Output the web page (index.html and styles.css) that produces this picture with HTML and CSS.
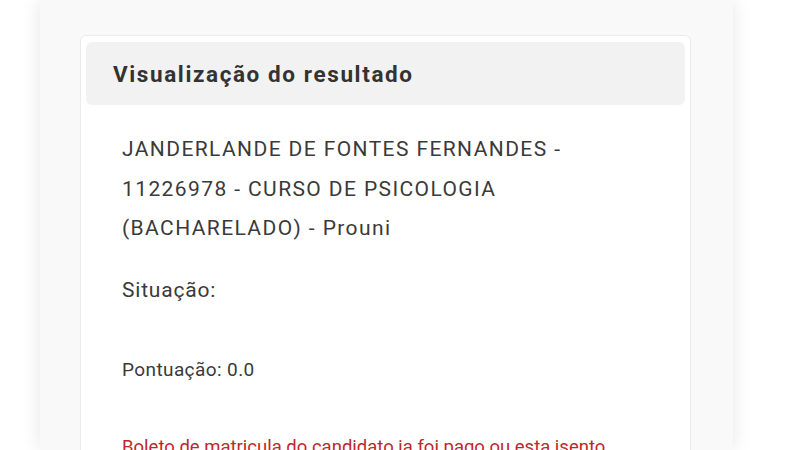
FILE: index.html
```html
<!DOCTYPE html>
<html lang="pt">
<head>
<meta charset="utf-8">
<link rel="stylesheet" href="styles.css">
</head>
<body>
<div class="page">
  <div class="panel">
    <div class="card">
      <div class="card-header">
        <h2 class="card-title">Visualização do resultado</h2>
      </div>
      <div class="card-body">
        <p class="candidate">JANDERLANDE DE FONTES FERNANDES - 11226978 - CURSO DE PSICOLOGIA (BACHARELADO) - Prouni</p>
        <p class="status">Situação:</p>
        <p class="score">Pontuação: 0.0</p>
        <p class="notice">Boleto de matricula do candidato ja foi pago ou esta isento</p>
      </div>
    </div>
  </div>
</div>
</body>
</html>
```

FILE: styles.css
```css
html, body {
  margin: 0;
  padding: 0;
  background: #ffffff;
  height: 100%;
  overflow: hidden;
}
body {
  font-family: Roboto, "Liberation Sans", sans-serif;
  color: #3a3a3a;
}
.page {
  padding-left: 40px;
  height: 450px;
}
.panel {
  width: 693px;
  height: 100%;
  box-sizing: border-box;
  background: #f9f9f9;
  box-shadow: 0 0 18px rgba(0, 0, 0, 0.10);
  padding: 35px 42px 0 40px;
}
.card {
  background: #ffffff;
  border: 1px solid #ebebeb;
  border-radius: 6px;
  padding: 6px 5px 0 5px;
  height: 500px;
}
.card-header {
  background: #f2f2f2;
  border-radius: 6px;
  height: 63px;
  display: flex;
  align-items: center;
  padding-left: 27px;
}
.card-title {
  margin: 0;
  font-size: 22.5px;
  font-weight: 700;
  letter-spacing: 1.6px;
  color: #333333;
}
.card-body {
  padding: 25px 30px 0 36px;
}
.card-body p {
  margin: 0;
}
.candidate {
  font-size: 21px;
  line-height: 39.5px;
  letter-spacing: 1.4px;
}
.status {
  font-size: 21px;
  line-height: 40px;
  letter-spacing: 0.8px;
  margin-top: 21px !important;
}
.score {
  font-size: 19px;
  line-height: 40px;
  letter-spacing: 0.4px;
  margin-top: 40px !important;
}
.notice {
  font-size: 18.5px;
  line-height: 40px;
  margin-top: 37px !important;
  color: #c0272d;
}
```
